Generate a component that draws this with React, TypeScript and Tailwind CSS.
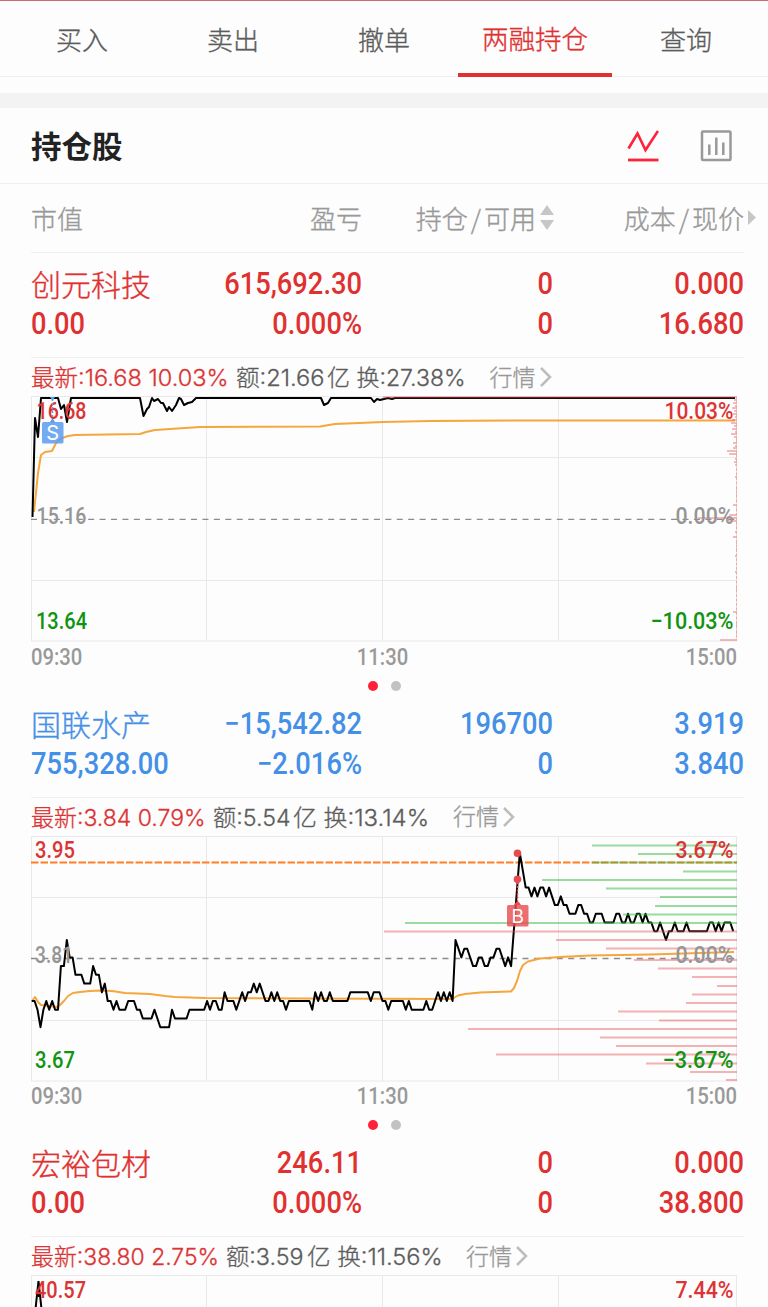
import React from "react";

const CJK = "font-['Noto_Sans_CJK_SC',sans-serif]";
const THIN = "font-light [-webkit-text-stroke:0.35px_currentColor]";
const NUM = "font-['Roboto','Noto_Sans_CJK_SC',sans-serif]";
const RED = "#dc3434";
const GRAY = "#969696";
const GREEN = "#109410";

const tabs = ["买入", "卖出", "撤单", "两融持仓", "查询"];

type Stock = {
  name: string;
  value: string;
  profit: string;
  percent: string;
  hold: string;
  usable: string;
  cost: string;
  price: string;
  color: string;
  latest: string;
  latestWidth: number;
  detail: string;
  detailWidth: number;
  unit: string;
  unitWidth: number;
};

const stocks: Stock[] = [
  {
    name: "创元科技", value: "0.00", profit: "615,692.30", percent: "0.000%",
    hold: "0", usable: "0", cost: "0.000", price: "16.680", color: "text-[#e03131]",
    latest: "最新:16.68 10.03%", latestWidth: 197.5, detail: "额:21.66", detailWidth: 88.5,
    unit: "亿 换:27.38%", unitWidth: 138.5,
  },
  {
    name: "国联水产", value: "755,328.00", profit: "−15,542.82", percent: "−2.016%",
    hold: "196700", usable: "0", cost: "3.919", price: "3.840", color: "text-[#4490e6]",
    latest: "最新:3.84 0.79%", latestWidth: 174.5, detail: "额:5.54", detailWidth: 77.5,
    unit: "亿 换:13.14%", unitWidth: 136,
  },
  {
    name: "宏裕包材", value: "0.00", profit: "246.11", percent: "0.000%",
    hold: "0", usable: "0", cost: "0.000", price: "38.800", color: "text-[#e03131]",
    latest: "最新:38.80 2.75%", latestWidth: 188, detail: "额:3.59", detailWidth: 77.5,
    unit: "亿 换:11.56%", unitWidth: 135.5,
  },
];

// [minute since open, price in cents]
const prices: [number, number][] = [
  [0, 376], [1, 376], [2, 375], [3, 373], [4, 375], [5, 376], [6, 375], [7, 376], [8, 375], [9, 375],
  [10, 380], [11, 380], [12, 383], [13, 381], [14, 381], [15, 379], [17, 379], [18, 378], [20, 378],
  [21, 380], [22, 379], [23, 379], [24, 377], [25, 378], [26, 376], [27, 376], [28, 375], [29, 376],
  [30, 375], [32, 375], [33, 376], [35, 376], [36, 375], [37, 375], [38, 374], [41, 374], [42, 375],
  [44, 373], [47, 373], [48, 375], [49, 374], [53, 374], [54, 375], [59, 375], [60, 376], [61, 375],
  [62, 376], [63, 376], [64, 375], [65, 375], [66, 377], [67, 376], [69, 376], [70, 375], [72, 377],
  [73, 376], [74, 377], [75, 377], [76, 378], [77, 377], [78, 378], [80, 376], [81, 376], [82, 377],
  [83, 376], [84, 377], [85, 376], [86, 376], [87, 375], [88, 376], [95, 376], [96, 375], [97, 377],
  [98, 376], [99, 377], [100, 376], [101, 376], [102, 377], [103, 376], [108, 376], [109, 377],
  [115, 377], [116, 376], [117, 377], [119, 377], [120, 376], [121, 376], [122, 375], [123, 376],
  [127, 376], [128, 375], [129, 376], [130, 375], [134, 375], [135, 376], [136, 375], [137, 375],
  [139, 377], [140, 376], [141, 377], [142, 376], [143, 377], [144, 376], [145, 383], [147, 381],
  [148, 382], [149, 382], [151, 380], [152, 380], [153, 381], [154, 381], [155, 380], [156, 380],
  [157, 381], [158, 381], [159, 382], [160, 382], [162, 380], [163, 381], [164, 380], [167, 393],
  [169, 389], [170, 389], [171, 388], [172, 389], [173, 388], [174, 389], [175, 389], [176, 388],
  [177, 389], [179, 387], [180, 387], [181, 388], [182, 387], [183, 387], [184, 386], [186, 386],
  [187, 387], [188, 387], [189, 386], [190, 386], [191, 385], [192, 385], [193, 386], [195, 386],
  [196, 385], [199, 385], [200, 386], [201, 386], [202, 385], [203, 385], [204, 386], [205, 385],
  [206, 385], [207, 386], [208, 386], [209, 385], [210, 386], [211, 385], [212, 385], [213, 384],
  [214, 384], [215, 385], [217, 383], [218, 384], [219, 384], [220, 385], [221, 384], [223, 384],
  [224, 385], [225, 384], [231, 384], [232, 385], [233, 385], [234, 384], [235, 385], [236, 384],
  [237, 385], [239, 385], [240, 384],
];

const priceLine = prices
  .map(([m, p]) => `${(31.7 + m * 2.923).toFixed(1)},${(165 - (p - 376) * 8.72).toFixed(1)}`)
  .join(" ");

// [y, left edge]
const sellVolume: [number, number][] = [
  [9.5, 592], [18, 638], [26.5, 592], [35.5, 683], [44, 542], [52.5, 606], [61, 660], [70, 655],
  [78.5, 623], [87, 405],
];
const buyVolume: [number, number][] = [
  [95.5, 384], [104, 556], [112.5, 606], [124, 634], [132.5, 658], [141, 692], [150, 717],
  [158.5, 692], [167, 686], [175.5, 618], [184.5, 659], [193, 468], [201.5, 600], [210, 616],
  [218.5, 496], [227.5, 646], [236, 690], [244, 726],
];
const firstVolume: [number, number][] = [
  [4, 734], [7, 733], [10, 735], [12, 732], [15, 734], [18, 733], [21, 735], [24, 732], [27, 731],
  [30, 734], [33, 732], [36, 735], [38, 731], [41, 734], [44, 736], [47, 733], [50, 735], [52, 733],
  [55, 727], [58, 729], [63, 735], [66, 734], [69, 735], [81, 735], [87, 736], [93, 736], [99, 736],
  [104, 736], [109, 733], [113, 736], [119, 729], [122, 698], [125, 728], [131, 736], [136, 735],
  [141, 733], [147, 736], [153, 736], [160, 735], [168, 736], [176, 735], [186, 736], [193, 736],
  [204, 736], [216, 733], [222, 736], [229, 736], [237, 736], [244, 720],
];

const Bars = ({ data, color, size = 2 }: { data: [number, number][]; color: string; size?: number }) => (
  <g stroke={color} strokeWidth={size}>
    {data.map(([y, x]) => (
      <line key={y} x1={x} x2={737} y1={y} y2={y} />
    ))}
  </g>
);

type LabelProps = { x: number; y: number; w: number; fill: string; end?: boolean; children: string };

const Label = ({ x, y, w, fill, end, children }: LabelProps) => (
  <text
    x={end ? x - w : x}
    y={y}
    fill={fill}
    textLength={w}
    lengthAdjust="spacingAndGlyphs"
    className="font-['Roboto',sans-serif] text-[23px] font-medium"
  >
    {children}
  </text>
);

const Grid = ({ mid = 122.5 }: { mid?: number }) => (
  <g>
    <g stroke="#e9e9ea" strokeWidth={1}>
      <rect x={31.5} y={0.5} width={705} height={244.5} fill="none" />
      {[206.5, 382.5, 558.5].map((x) => (
        <line key={x} x1={x} x2={x} y1={0} y2={245} />
      ))}
      <line x1={31} x2={737} y1={61.5} y2={61.5} />
      <line x1={31} x2={737} y1={184.5} y2={184.5} />
    </g>
    <line x1={31} x2={737} y1={mid} y2={mid} stroke="#8c8c8c" strokeWidth={1.3} strokeDasharray="6 5.43" />
  </g>
);

const FirstChart = () => (
  <>
    <Grid mid={123.4} />
    <polyline
      fill="none"
      stroke="#f5a63c"
      strokeWidth={2}
      strokeLinejoin="round"
      points="34,116 38,77 41,59 45,56 52,55 56,47 62,42 68,40 75,39 140,38 146,36 155,34 170,33 200,31 320,30.5 335,28 383,26 430,25 510,24.5 735,24.5"
    />
    <polyline
      fill="none"
      stroke="#000"
      strokeWidth={2}
      strokeLinejoin="round"
      points="32.5,121 35,22 38,41 41,2 58,2 61,13 64,9 67,26 71,2 140,2 143.5,20 147,13 149,11 152,2 154,5 158,3 161,7 163,7 167,15 169,11 172,15 176,9 179,2 181,3 184,9 188,7 192,6 196,2 321,2 324,9 328,7 331,2 371,2 374,6 377,3 380,4 384,3 388,2 392,3 395,2 735,2"
    />
    <line x1={383} x2={737} y1={1.2} y2={1.2} stroke="#e2555a" strokeOpacity={0.45} strokeWidth={2} />
    <Bars data={firstVolume} color="rgba(232,100,105,0.6)" size={1.5} />
    <line x1={736.5} x2={736.5} y1={0} y2={245} stroke="#f0a8aa" strokeDasharray="3 1.5" />
    <Label x={36.5} y={22.7} w={50} fill={RED}>16.68</Label>
    <Label x={36.5} y={127.7} w={50} fill={GRAY}>15.16</Label>
    <Label x={36} y={232.7} w={51} fill={GREEN}>13.64</Label>
    <Label end x={733.5} y={22.7} w={69} fill={RED}>10.03%</Label>
    <Label end x={733.5} y={127.7} w={58} fill={GRAY}>0.00%</Label>
    <Label end x={733.5} y={232.7} w={83} fill={GREEN}>−10.03%</Label>
    <line x1={52.5} x2={52.5} y1={3} y2={26} stroke="#5b9cf0" strokeWidth={1.5} strokeDasharray="2 2" />
    <path d="M50 1h5l-2.5 4zM49.5 26.5l3-4 3 4z" fill="#5b9cf0" />
    <rect x={42} y={26} width={21.5} height={21.5} rx={1.5} fill="#5b9cf0" fillOpacity={0.85} />
    <text x={52.7} y={44.2} textAnchor="middle" fill="#fff" className="font-['Inter',sans-serif] text-[20px]">
      S
    </text>
  </>
);

const SecondChart = () => (
  <>
    <Grid />
    <polyline
      fill="none"
      stroke="#f5a63c"
      strokeWidth={2}
      strokeLinejoin="round"
      points="32,165 35,161 38,166 41,169 57,171 60,169 64,165 68,160 73,157 80,156 90,155 100,154.5 112,155 125,157 150,158 165,160 175,161 205,162 300,162.5 452,163 458,159.5 465,158 480,156.5 511,155.5 514,152 517,145 520,135 523,129 528,125.5 540,122.5 560,121 590,119.5 650,118.5 734,116"
    />
    <line x1={31} x2={737} y1={26.5} y2={26.5} stroke="#ff7f24" strokeWidth={2} strokeDasharray="7.5 2" />
    <polyline fill="none" stroke="#000" strokeWidth={2} strokeLinejoin="round" points={priceLine} />
    <Bars data={sellVolume} color="rgba(60,185,65,0.5)" />
    <Bars data={buyVolume} color="rgba(232,75,80,0.42)" />
    <Label x={35} y={22} w={40} fill={RED}>3.95</Label>
    <Label x={35} y={127} w={38} fill={GRAY}>3.81</Label>
    <Label x={35} y={232} w={40} fill={GREEN}>3.67</Label>
    <Label end x={733.5} y={22} w={58} fill={RED}>3.67%</Label>
    <Label end x={733.5} y={127} w={58} fill={GRAY}>0.00%</Label>
    <Label end x={733.5} y={232} w={71} fill={GREEN}>−3.67%</Label>
    <line x1={517.5} x2={517.5} y1={43} y2={69} stroke="#e84a4e" strokeWidth={1.5} strokeDasharray="2 1.5" />
    <circle cx={517.5} cy={17.2} r={3.8} fill="#e84a4e" />
    <circle cx={517.5} cy={43.2} r={3.8} fill="#e84a4e" />
    <path d="M514 69q3.500-7 7 0z" fill="#e84a4e" />
    <rect x={507} y={69} width={21.5} height={21.5} rx={1.5} fill="#e84a4e" fillOpacity={0.8} />
    <text x={517.7} y={87} textAnchor="middle" fill="#fff" className="font-['Inter',sans-serif] text-[19px]">
      B
    </text>
  </>
);

const ThirdChart = () => (
  <>
    <Grid />
    <polyline fill="none" stroke="#000" strokeWidth={2} points="35.5,34 38.5,6 41.5,34" />
    <line x1={38.5} x2={38.5} y1={12} y2={22} stroke="#000" strokeWidth={2} />
    <Label x={35} y={22.5} w={51} fill={RED}>40.57</Label>
    <Label end x={733.5} y={22.5} w={58} fill={RED}>7.44%</Label>
  </>
);

const charts = [<FirstChart key="a" />, <SecondChart key="b" />, <ThirdChart key="c" />];

// Fixed-width run of text, squeezed a little so the line keeps its width
const Run = ({ w, color, children }: { w: number; color: string; children: string }) => (
  <svg width={w} height={38} className="shrink-0 overflow-visible">
    <text
      x={0}
      y={27.5}
      fill={color}
      stroke={color}
      strokeWidth={0.3}
      textLength={w}
      lengthAdjust="spacingAndGlyphs"
      className="font-['Inter','Noto_Sans_CJK_SC',sans-serif] text-[22.5px] font-light"
    >
      {children}
    </text>
  </svg>
);

const Num = ({ children, left }: { children: string; left?: boolean }) => (
  <span
    className={
      left
        ? `${NUM} inline-block origin-left scale-x-[0.895] text-[30.5px] font-medium`
        : `${NUM} inline-block origin-right scale-x-[0.895] text-right text-[30.5px] font-medium`
    }
  >
    {children}
  </span>
);

const COLS = "grid grid-cols-[150px_181px_191px_191px] pl-[31px]";

type BlockProps = { stock: Stock; chart: React.ReactNode; last: boolean };

const StockBlock = ({ stock, chart, last }: BlockProps) => (
  <section className="h-[439.5px] shrink-0">
    <div className={`${COLS} h-[104px] content-start pt-[11px] leading-[40px] ${stock.color}`}>
      <span className={`${CJK} ${THIN} -mt-px text-[30px] whitespace-nowrap`}>{stock.name}</span>
      <Num>{stock.profit}</Num>
      <Num>{stock.hold}</Num>
      <Num>{stock.cost}</Num>
      <Num left>{stock.value}</Num>
      <Num>{stock.percent}</Num>
      <Num>{stock.usable}</Num>
      <Num>{stock.price}</Num>
    </div>
    <div className="mr-6 ml-[31px] h-px bg-[#f0f0f1]" />
    <div className="flex h-[38px] items-center pl-[31px]">
      <Run w={stock.latestWidth} color="#dc3434">{stock.latest}</Run>
      <span className="w-[7px]" />
      <Run w={stock.detailWidth} color="#5c5c5c">{stock.detail}</Run>
      <span className="w-[3px]" />
      <Run w={stock.unitWidth} color="#5c5c5c">{stock.unit}</Run>
      <span className={`${CJK} ${THIN} -mt-0.5 ml-6 text-[23px] text-[#999]`}>行情</span>
      <svg width="14" height="22" viewBox="0 0 14 22" className="ml-[3px]" fill="none" stroke="#bdbdbd" strokeWidth="2.5">
        <path d="M2 2l9 9-9 9" />
      </svg>
    </div>
    <svg width="768" height="246" viewBox="0 0 768 246" className="block">
      {chart}
    </svg>
    {!last && (
      <>
        <div className="mx-[31px] flex h-8 items-center justify-between font-['Roboto',sans-serif] text-[23px] font-medium text-[#999]">
          <span className="w-[51px] origin-left scale-x-[0.88]">09:30</span>
          <span className="flex w-[55px] origin-center scale-x-[0.88] justify-center">11:30</span>
          <span className="flex w-[55px] origin-right scale-x-[0.88] justify-end">15:00</span>
        </div>
        <div className="flex justify-center gap-[13px] pt-[6.5px]">
          <span className="size-[10px] rounded-full bg-[#ff2238]" />
          <span className="size-[10px] rounded-full bg-[#c2c2c2]" />
        </div>
      </>
    )}
  </section>
);

const App: React.FC = () => {
  return (
    <div className="flex h-[1307px] w-[768px] flex-col overflow-hidden bg-[#fdfdfd]">
      <div className="h-px shrink-0 bg-[#cf6a6e]" />
      <nav className="h-[76px] shrink-0 border-b border-[#f0f0f1] px-[6.5px]">
        <ul className={`${CJK} ${THIN} flex h-[76px] text-[26px] text-[#5c5c5c]`}>
          {tabs.map((tab) => (
            <li
              key={tab}
              className={
                tab === "两融持仓"
                  ? "-mx-[1.5px] flex w-[154px] items-center justify-center border-b-4 border-[#e03131] pt-0.5 text-[26.5px] text-[#e03131]"
                  : "flex w-[151px] items-center justify-center pb-0.5"
              }
            >
              {tab}
            </li>
          ))}
        </ul>
      </nav>
      <div className="mt-4 h-[15px] shrink-0 bg-[#f3f3f3]" />
      <header className="flex h-[76px] shrink-0 items-center justify-between border-b border-[#f0f0f1] pr-9 pl-[31px]">
        <h1 className={`${CJK} text-[30.5px] font-bold text-[#222]`}>持仓股</h1>
        <div className="flex gap-[41px]">
          <svg width="32" height="32" viewBox="0 0 32 32" fill="none" stroke="#ff2238">
            <path d="M1.5 18.5L10.5 3.5L18.5 20L31 1" strokeWidth="2.6" />
            <path d="M1 30h30.5" strokeWidth="2.8" />
          </svg>
          <svg width="32" height="32" viewBox="0 0 32 32" fill="none" stroke="#999" strokeWidth="2.5">
            <rect x="2" y="1.5" width="28.5" height="28.5" rx="1" />
            <path d="M9.300 14.5v10.5M16.300 7.5v17.5M23.300 12.5v12.5" />
          </svg>
        </div>
      </header>
      <div className={`${COLS} ${CJK} ${THIN} h-[68px] shrink-0 items-center text-[26px] text-[#999]`}>
        <span className="-mt-px">市值</span>
        <span className="-mt-px text-right">盈亏</span>
        <span className="-mt-px -mr-px flex items-center justify-end gap-1">
          <span className="whitespace-nowrap">
            持仓<span className="mx-[3px]">/</span>可用
          </span>
          <svg width="14" height="25" viewBox="0 0 14 25" fill="#c6c6c6">
            <path d="M7 0l7 10H0zM0 15h14l-7 10z" />
          </svg>
        </span>
        <span className="-mt-px -mr-[12px] flex items-center justify-end gap-1">
          <span className="whitespace-nowrap">
            成本<span className="mx-[3px]">/</span>现价
          </span>
          <svg width="8" height="15" viewBox="0 0 8 15" fill="#c6c6c6">
            <path d="M0 0l8 7.5-8 7.5z" />
          </svg>
        </span>
      </div>
      <div className="mr-6 ml-[31px] h-px shrink-0 bg-[#f0f0f1]" />
      {stocks.map((stock, i) => (
        <StockBlock key={stock.name} stock={stock} chart={charts[i]} last={i === stocks.length - 1} />
      ))}
    </div>
  );
};

export default App;
